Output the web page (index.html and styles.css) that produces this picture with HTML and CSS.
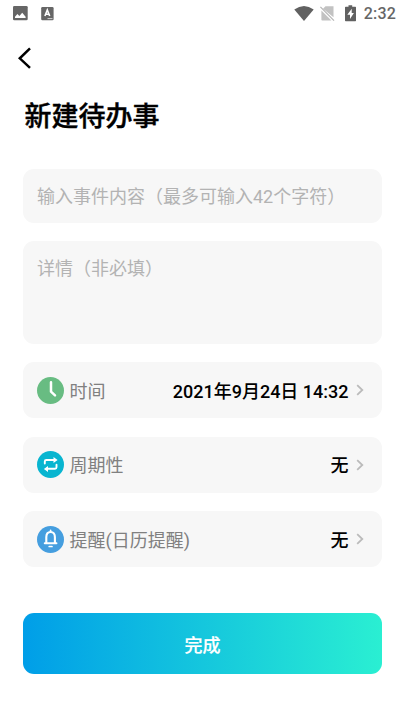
FILE: index.html
```html
<!DOCTYPE html>
<html lang="zh-CN">
<head>
<meta charset="utf-8">
<title>新建待办事</title>
<link rel="stylesheet" href="styles.css">
</head>
<body>
<div class="status">
  <svg class="status-icons" width="44" height="16" viewBox="0 0 44 16">
    <rect x="1" y="1" width="14.7" height="14.2" rx="1.3" fill="#666"/>
    <path d="M3 13v-1.3l2.4-2.7 2 2 2.8-3.3 3.4 4V13z" fill="#fff"/>
    <rect x="29.2" y="2" width="12.4" height="13.2" rx="1.2" fill="#666"/>
    <path d="M32.9 11l2.4-6 2.4 6M33.7 9.2h3.2" fill="none" stroke="#fff" stroke-width="1.6"/>
    <path d="M35.5 13.6h5" stroke="#ddd" stroke-width=".9"/>
  </svg>
  <div class="status-right">
    <svg width="64" height="18" viewBox="0 0 64 18">
      <path d="M.3 4.600Q10-2.600 19.700 4.600L10 16z" fill="#616161"/>
      <path d="M31.500 1.300H39.500V12.300L29 3.800zM27.400 5.400L37.400 15.500H28.200Q27.400 15.500 27.400 14.700z" fill="#c2c2c2"/>
      <path d="M26.400 1.800L40 15.700" stroke="#b5b5b5" stroke-width="1.200"/>
      <path d="M54.500 .3h3.700v1.500h3.200q.6 0 .6.7v13q0 .8-.6.8H51.700q-.7 0-.7-.8V2.500q0-.7.7-.7h2.800z" fill="#616161"/>
      <path d="M57.700 3.800L53.300 9.700h2.700v4.300L59.900 8.100H57.700z" fill="#fff"/>
    </svg>
    <span class="clock">2:32</span>
  </div>
</div>
<div class="nav">
  <svg width="16" height="24" viewBox="0 0 16 24"><path d="M13 2.300L2.800 12.300l10.200 9.500" fill="none" stroke="#000" stroke-width="2.500"/></svg>
</div>
<h1 class="title">新建待办事</h1>
<main class="form">
  <div class="field field-name">输入事件内容（最多可输入42个字符）</div>
  <div class="field field-detail">详情（非必填）</div>
  <div class="rows">
    <div class="row">
      <svg class="row-icon" viewBox="0 0 27 27"><circle cx="13.500" cy="13.500" r="13.500" fill="#68bc82"/><path d="M14 5.300V14.700L18 18.400" fill="none" stroke="#fff" stroke-width="2.500" stroke-linecap="round" stroke-linejoin="round"/></svg>
      <span class="label">时间</span>
      <span class="value">2021年9月24日 14:32</span>
      <svg class="chevron" viewBox="0 0 8 12"><path d="M1.200 1.200L6.300 6L1.200 10.800" fill="none" stroke="#bbb" stroke-width="1.800"/></svg>
    </div>
    <div class="row">
      <svg class="row-icon" viewBox="0 0 27 27"><circle cx="13.500" cy="13.500" r="13.500" fill="#08b5d0"/><path d="M7.800 12.500V10.500Q7.800 9 9.300 9H17.500M19.500 13.800V16.300Q19.500 17.800 18 17.800H9.800" fill="none" stroke="#fff" stroke-width="1.900" stroke-linecap="round"/><path d="M16.500 6L20.600 9L16.500 12zM11 14.900L6.900 17.900L11 20.900z" fill="#fff"/></svg>
      <span class="label">周期性</span>
      <span class="value">无</span>
      <svg class="chevron" viewBox="0 0 8 12"><path d="M1.200 1.200L6.300 6L1.200 10.800" fill="none" stroke="#bbb" stroke-width="1.800"/></svg>
    </div>
    <div class="row">
      <svg class="row-icon" viewBox="0 0 27 27"><circle cx="13.500" cy="13.500" r="13.500" fill="#459edf"/><path d="M9.300 17V11.300Q9.300 6 13.600 6T17.900 11.300V17M7.800 17.300H19.400" fill="none" stroke="#fff" stroke-width="2.100" stroke-linecap="round"/><path d="M13.600 4.300V6M12.200 20.500H15" stroke="#fff" stroke-width="1.700" stroke-linecap="round"/></svg>
      <span class="label">提醒(日历提醒)</span>
      <span class="value">无</span>
      <svg class="chevron" viewBox="0 0 8 12"><path d="M1.200 1.200L6.300 6L1.200 10.800" fill="none" stroke="#bbb" stroke-width="1.800"/></svg>
    </div>
  </div>
</main>
<button class="submit">完成</button>
</body>
</html>
```
FILE: styles.css
```css
* { box-sizing: border-box; }
body {
  margin: 0;
  height: 720px;
  overflow: hidden;
  background: #fff;
  font-family: Roboto, "Noto Sans CJK SC", sans-serif;
  font-size: 18px;
}
svg { display: block; flex: none; }
.status {
  height: 28px;
  padding: 0 9px 0 12px;
  display: flex;
  align-items: center;
  justify-content: space-between;
}
.status-icons { margin-bottom: 2px; }
.status-right { display: flex; align-items: center; gap: 6px; }
.clock { font-size: 16px; font-weight: 500; line-height: 28px; color: #666; letter-spacing: .2px; }
.nav { height: 63px; padding: 18px 0 0 17px; }
.title {
  margin: 0 0 0 24.5px;
  height: 78px;
  line-height: 52px;
  font-size: 27px;
  font-weight: 500;
  color: #000;
  -webkit-text-stroke: .4px #000;
}
.form { margin: 0 22.600px; display: flex; flex-direction: column; gap: 18px; }
.rows { display: flex; flex-direction: column; gap: 18.500px; }
.field {
  background: #f7f7f7;
  border-radius: 11px;
  padding: 0 14.400px;
  line-height: 56px;
  color: #b3b3b3;
  white-space: nowrap;
}
.field-name { height: 54px; }
.field-detail { height: 103px; }
.row {
  height: 56px;
  display: flex;
  align-items: center;
  padding: 0 18.400px 0 14px;
  background: #f7f7f7;
  border-radius: 11px;
}
.row-icon { width: 27px; height: 27px; }
.label { margin-left: 6px; padding-bottom: 1px; color: #808080; }
.value { margin-left: auto; padding-bottom: 1px; font-weight: 500; color: #000; }
.chevron { width: 8px; height: 12px; margin-left: 7.500px; }
.submit {
  display: block;
  width: 359.800px;
  height: 61px;
  margin: 46px 22.600px 0;
  padding: 0;
  border: 0;
  border-radius: 11px;
  background: linear-gradient(90deg, #009ee8, #2aefd2);
  color: #fff;
  font: 500 18px Roboto, "Noto Sans CJK SC", sans-serif;
  -webkit-text-stroke: .2px #fff;
}
```
